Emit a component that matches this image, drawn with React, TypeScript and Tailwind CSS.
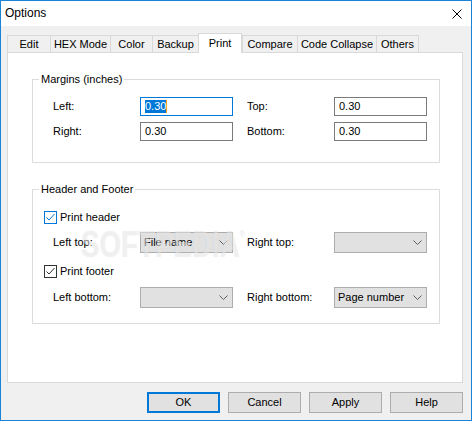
import React from 'react'

const tabs = [
  { label: 'Edit', w: 'w-[43px]' },
  { label: 'HEX Mode', w: 'w-[60px]' },
  { label: 'Color', w: 'w-[42px]' },
  { label: 'Backup', w: 'w-[46px]' },
  { label: 'Print', w: 'w-[44px]', active: true },
  { label: 'Compare', w: 'w-[55px]' },
  { label: 'Code Collapse', w: 'w-[79px]' },
  { label: 'Others', w: 'w-[43px]' },
]

function TextBox({ value, focused = false }: { value: string; focused?: boolean }) {
  return (
    <div
      className={`w-[93px] h-[19px] bg-white border flex items-center pl-[4px] ${
        focused ? 'border-[#0078d7]' : 'border-[#7a7a7a]'
      }`}
    >
      {focused ? (
        <span className="bg-[#0078d7] text-white border-r border-[#f7a21b] leading-[13px]">{value}</span>
      ) : (
        <span>{value}</span>
      )}
    </div>
  )
}

function Combo({ value = '' }: { value?: string }) {
  return (
    <div className="w-[93px] h-[21px] bg-[#e1e1e1] border border-[#adadad] flex items-center justify-between pl-[3px] pr-[4px]">
      <span>{value}</span>
      <svg width="9" height="5" viewBox="0 0 9 5" className="text-[#606060]">
        <polyline points="0.5,0.5 4.5,4.5 8.5,0.5" fill="none" stroke="currentColor" strokeWidth="1" />
      </svg>
    </div>
  )
}

function CheckBox({ label, focused = false }: { label: string; focused?: boolean }) {
  const color = focused ? 'border-[#0078d7] text-[#0078d7]' : 'border-[#333333] text-[#333333]'
  return (
    <div className="flex items-center h-[13px] pl-[11px] gap-[3px]">
      <div className={`w-[13px] h-[13px] border bg-white flex items-center justify-center ${color}`}>
        <svg width="11" height="11" viewBox="0 0 11 11">
          <polyline points="1.5,5.5 4,8 9.5,2" fill="none" stroke="currentColor" strokeWidth="1" />
        </svg>
      </div>
      <span>{label}</span>
    </div>
  )
}

function Button({ label, primary = false }: { label: string; primary?: boolean }) {
  return (
    <div
      className={`w-[73px] h-[21px] bg-[#e1e1e1] flex items-center justify-center ${
        primary ? 'border-2 border-[#0078d7]' : 'border border-[#adadad]'
      }`}
    >
      {label}
    </div>
  )
}

export default function App() {
  return (
    <div className="relative w-[472px] h-[421px] border border-[#1883d7] bg-[#f0f0f0] flex flex-col text-[11px] leading-[13px] text-black font-['Liberation_Sans',Arial,sans-serif]">
      {/* Title bar */}
      <div className="h-[25px] bg-white flex items-center justify-between pl-[4px] pr-[9px]">
        <span className="text-[12px]">Options</span>
        <svg width="10" height="10" viewBox="0 0 10 10">
          <path d="M0.5 0.5 L9.5 9.5 M9.5 0.5 L0.5 9.5" stroke="#000" strokeWidth="1" />
        </svg>
      </div>

      {/* Tabs */}
      <div className="flex items-end h-[19px] mt-[7px] ml-[6px]">
        {tabs.map((t, i) =>
          t.active ? (
            <div
              key={t.label}
              className={`${t.w} h-[20px] -mb-[1px] relative z-10 bg-white border border-b-0 border-[#d9d9d9] flex justify-center pt-[3px]`}
            >
              {t.label}
            </div>
          ) : (
            <div
              key={t.label}
              className={`${t.w} h-[17px] bg-[#f0f0f0] border-t border-l border-[#d9d9d9] flex items-center justify-center ${
                i === tabs.length - 1 ? 'border-r' : ''
              }`}
            >
              {t.label}
            </div>
          )
        )}
      </div>

      {/* Panel */}
      <div className="w-[456px] h-[331px] ml-[6px] bg-white border border-[#d9d9d9] pl-[24px]">
        <fieldset className="w-[408px] mt-[20px] border border-[#dcdcdc] pt-[11px] pb-[21px]">
          <legend className="ml-[6px] px-[2px]">Margins (inches)</legend>
          <div className="flex flex-col gap-[6px] pl-[20px]">
            <div className="flex items-center">
              <span className="w-[87px]">Left:</span>
              <TextBox value="0.30" focused />
              <span className="w-[87px] ml-[14px]">Top:</span>
              <TextBox value="0.30" />
            </div>
            <div className="flex items-center">
              <span className="w-[87px]">Right:</span>
              <TextBox value="0.30" />
              <span className="w-[87px] ml-[14px]">Bottom:</span>
              <TextBox value="0.30" />
            </div>
          </div>
        </fieldset>

        <fieldset className="w-[408px] mt-[20px] border border-[#dcdcdc] pt-[15px] pb-[15px]">
          <legend className="ml-[6px] px-[2px]">Header and Footer</legend>
          <CheckBox label="Print header" focused />
          <div className="flex items-center mt-[8px] pl-[20px]">
            <span className="w-[87px]">Left top:</span>
            <Combo value="File name" />
            <span className="w-[87px] ml-[14px]">Right top:</span>
            <Combo />
          </div>
          <div className="mt-[12px]">
            <CheckBox label="Print footer" />
          </div>
          <div className="flex items-center mt-[9px] pl-[20px]">
            <span className="w-[87px]">Left bottom:</span>
            <Combo />
            <span className="w-[87px] ml-[14px]">Right bottom:</span>
            <Combo value="Page number" />
          </div>
        </fieldset>
      </div>

      {/* Buttons */}
      <div className="w-[456px] ml-[6px] mt-[9px] flex justify-end gap-[8px]">
        <Button label="OK" primary />
        <Button label="Cancel" />
        <Button label="Apply" />
        <Button label="Help" />
      </div>

      {/* Watermark */}
      <div className="absolute left-[80px] top-[225px] pointer-events-none flex items-start origin-left scale-x-75">
        <span className="text-[37px] leading-none font-bold text-white/50 [text-shadow:0_0_1px_rgba(0,0,0,0.12)]">
          SOFTPEDIA
        </span>
        <span className="text-[9px] leading-none text-white/50 [text-shadow:0_0_1px_rgba(0,0,0,0.15)] mt-[4px]">®</span>
      </div>
    </div>
  )
}
